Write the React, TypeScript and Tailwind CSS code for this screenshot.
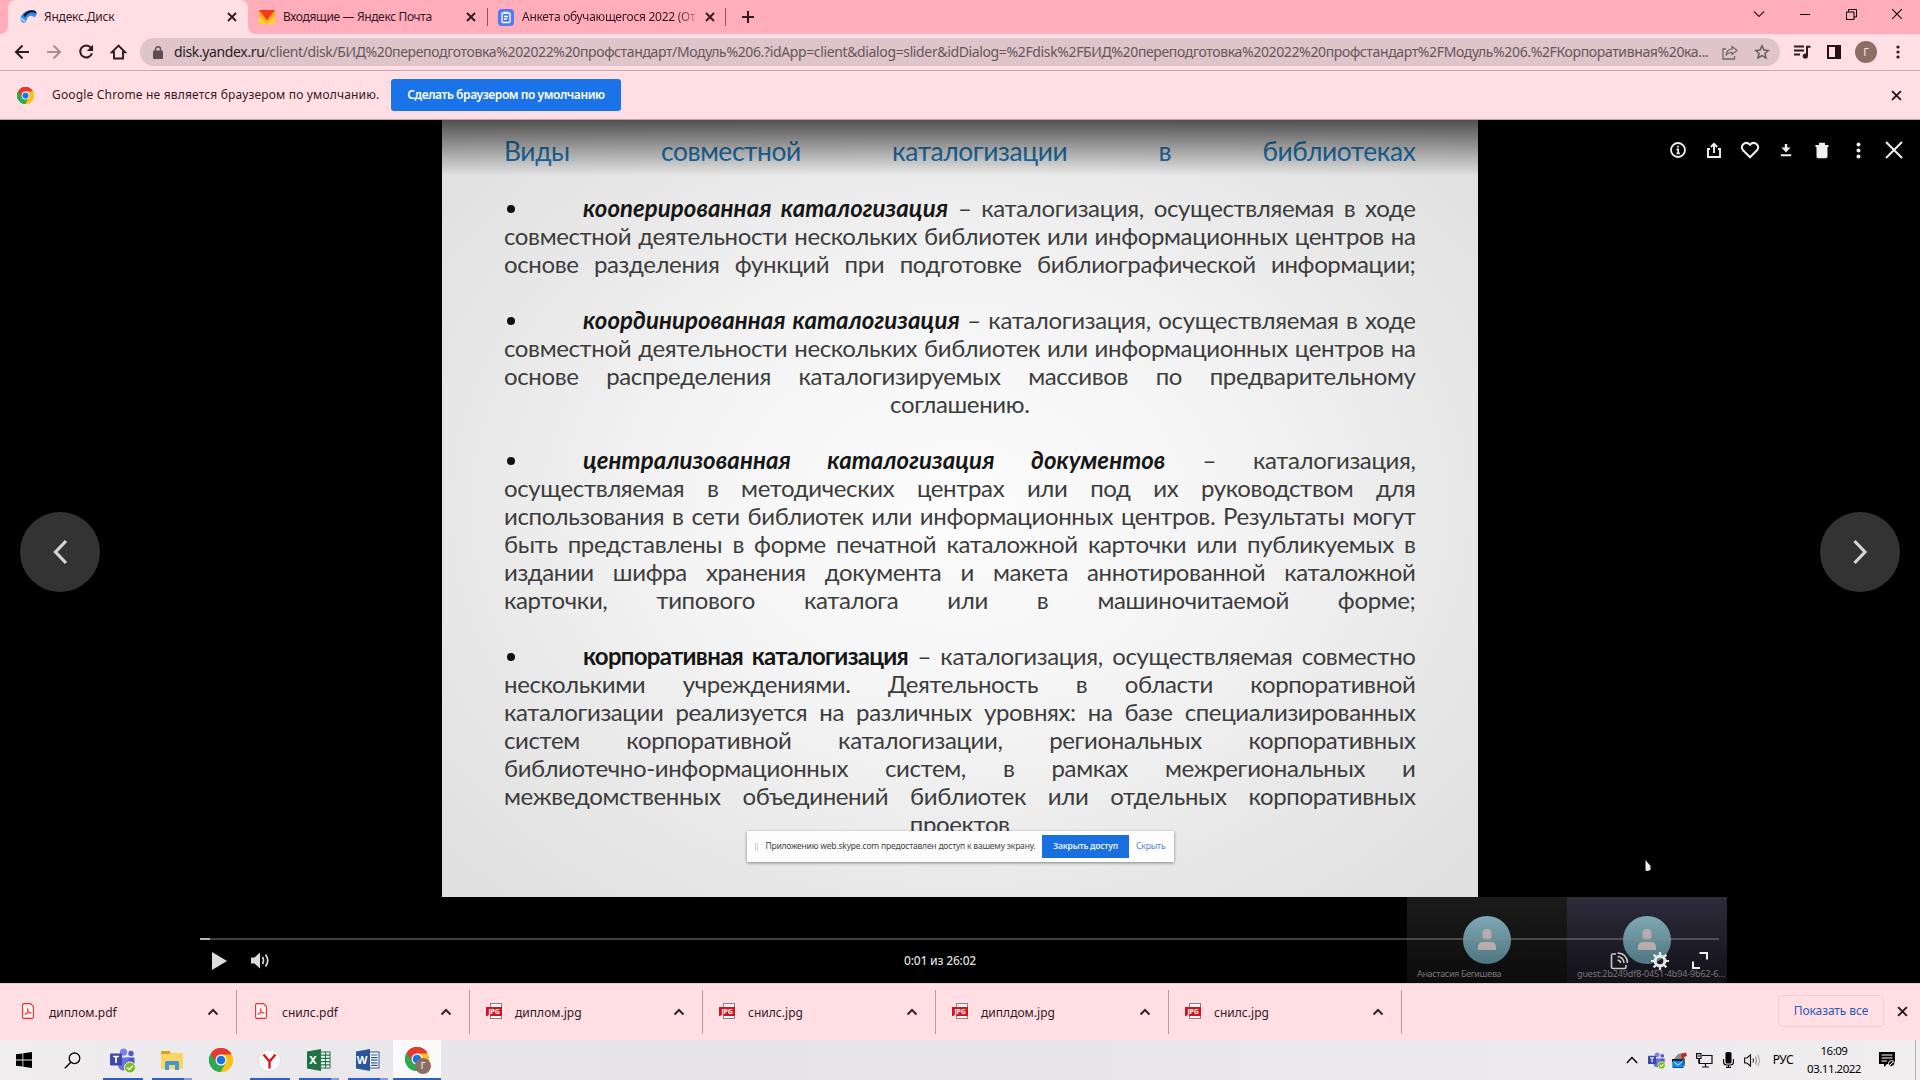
import type { ReactNode } from "react";

/* ---------- shared icons ---------- */

function CloseIcon({ size = 10, stroke = 1.8, color = "#2b1a1e" }: { size?: number; stroke?: number; color?: string }) {
  return (
    <svg width={size} height={size} viewBox="0 0 10 10" className="shrink-0">
      <path d="M1 1L9 9M9 1L1 9" stroke={color} strokeWidth={stroke} fill="none" />
    </svg>
  );
}

function ChromeLogo({ size }: { size: number }) {
  return (
    <svg width={size} height={size} viewBox="0 0 48 48" className="shrink-0">
      <path d="M24 24L3.2 12A24 24 0 0 1 44.8 12Z" fill="#e33b2e" />
      <path d="M24 24L44.8 12A24 24 0 0 1 24 48Z" fill="#fbc116" />
      <path d="M24 24L24 48A24 24 0 0 1 3.2 12Z" fill="#2da94f" />
      <path d="M24 13H45.3A24 24 0 0 0 3.2 12L14.5 29.5Z" fill="#e33b2e" />
      <path d="M33.5 29.5L23 48A24 24 0 0 0 45.3 13H24Z" fill="#fbc116" />
      <path d="M14.5 29.5L3.2 12A24 24 0 0 0 23 48L33.5 29.5Z" fill="#2da94f" />
      <circle cx="24" cy="24" r="11" fill="#fff" />
      <circle cx="24" cy="24" r="8.7" fill="#1a73e8" />
    </svg>
  );
}

/* ---------- browser chrome ---------- */

function DiskIcon() {
  return (
    <svg width="17" height="16" viewBox="0 0 17 16">
      <path d="M0.5 10C0.5 5 6 1 12 1C15 1 17 2.500 16.500 5C16 7 15 8 14 8.500C13 6.500 10 6 8 8C6.500 9.500 7 12 5 13.500C3 14.500 .5 13 .5 10Z" fill="#2f8df5" />
      <path d="M3.500 6C5.500 2.800 9 1 12.500 1.200C15.500 1.500 16.800 3 16.500 5C14 3 10.500 3.200 8 5C6.500 6 5.800 7 5 8C4 8 3.300 7 3.500 6Z" fill="#171a2a" />
      <path d="M1.200 9C2 11 3.500 12 5.200 11.500" stroke="#a8d4ff" strokeWidth="2" fill="none" />
    </svg>
  );
}

function MailIcon() {
  return (
    <svg width="16" height="14" viewBox="0 0 16 14">
      <path d="M0 0H16V14H0Z" fill="#ffcf2e" />
      <path d="M0 0L8 12L16 0V5L8 14L0 5Z" fill="#f9a91f" />
      <path d="M0 0H16L8 10.500Z" fill="#f23a1f" />
    </svg>
  );
}

function FormIcon() {
  return (
    <svg width="16" height="17" viewBox="0 0 16 17">
      <rect width="16" height="17" rx="4" fill="#4f79f6" />
      <rect x="4" y="4" width="8" height="9.500" rx="1.200" fill="none" stroke="#fff" strokeWidth="1.400" />
      <path d="M6 3.500H10M6 7.500H10M6 10H9" stroke="#fff" strokeWidth="1.300" />
    </svg>
  );
}

function TabStrip() {
  return (
    <div className="flex h-[34px] items-stretch bg-[#ffacbb]">
      <div className="flex w-2 items-end bg-[#ffdfe4]">
        <div className="h-full w-2 rounded-br-lg bg-[#ffacbb]" />
      </div>
      <div className="flex w-[240px] items-center rounded-t-lg bg-[#ffdfe4] pl-3 pr-[11px]">
        <DiskIcon />
        <span className="ml-[7px] flex-1 text-[12px] tracking-[-0.2px]">Яндекс.Диск</span>
        <CloseIcon />
      </div>
      <div className="flex w-2 bg-[#ffdfe4]">
        <div className="h-full w-2 rounded-bl-lg bg-[#ffacbb]" />
      </div>
      <div className="flex w-[231px] items-center pl-[3px] pr-[11px]">
        <MailIcon />
        <span className="ml-2 flex-1 whitespace-nowrap text-[12px] tracking-[-0.36px]">Входящие — Яндекс Почта</span>
        <CloseIcon />
      </div>
      <div className="my-2 w-px bg-[#8d5560]" />
      <div className="flex w-[237px] items-center pl-[10px] pr-[10px]">
        <FormIcon />
        <span className="ml-2 whitespace-nowrap bg-linear-to-r from-[#33181e] from-88% to-[#ffacbb] to-105% bg-clip-text text-[12px] tracking-[-0.27px] text-transparent">
          Анкета обучающегося 2022 (От
        </span>
        <span className="flex-1" />
        <CloseIcon />
      </div>
      <div className="my-2 w-px bg-[#8d5560]" />
      <div className="flex w-11 items-center justify-center">
        <svg width="14" height="14" viewBox="0 0 14 14">
          <path d="M7 1V13M1 7H13" stroke="#2b1a1e" strokeWidth="2" />
        </svg>
      </div>
      <div className="flex-1" />
      <div className="flex h-7 w-[184px] items-center">
        <div className="flex w-[46px] justify-center">
          <svg width="12" height="8" viewBox="0 0 12 8"><path d="M1 1.500L6 6.500L11 1.500" fill="none" stroke="#3a1d24" strokeWidth="1.200" /></svg>
        </div>
        <div className="flex w-[46px] justify-center">
          <div className="h-px w-[10px] bg-black" />
        </div>
        <div className="flex w-[46px] justify-center">
          <svg width="11" height="11" viewBox="0 0 11 11"><path d="M.5 3H8V10.500H.5ZM2.500 3V.5H10.500V8H8" fill="none" stroke="#000" /></svg>
        </div>
        <div className="flex w-[46px] justify-center">
          <CloseIcon size={12} stroke={0.9} color="#000" />
        </div>
      </div>
    </div>
  );
}

function Toolbar() {
  return (
    <div className="flex h-[37px] items-center border-b border-[#cfa9b0] bg-[#ffdfe4]">
      <div className="flex w-[140px] items-center pl-[6px]">
        <div className="flex w-8 justify-center">
          <svg width="16" height="16" viewBox="0 0 16 16"><path d="M15 8H2.500M8.500 1.500L2 8L8.500 14.500" fill="none" stroke="#2b1a1e" strokeWidth="2" /></svg>
        </div>
        <div className="flex w-8 justify-center">
          <svg width="16" height="16" viewBox="0 0 16 16"><path d="M1 8H13.500M7.500 1.500L14 8L7.500 14.500" fill="none" stroke="#a98e93" strokeWidth="2" /></svg>
        </div>
        <div className="flex w-8 justify-center">
          <svg width="16" height="16" viewBox="0 0 16 16">
            <path d="M12.900 3.600A6 6 0 1 0 14 9.200" fill="none" stroke="#2b1a1e" strokeWidth="2" />
            <path d="M15 .8V7H8.800Z" fill="#2b1a1e" />
          </svg>
        </div>
        <div className="flex w-8 justify-center">
          <svg width="17" height="16" viewBox="0 0 17 16"><path d="M8.500 1.600L1.800 8.300H4V14.500H13V8.300H15.200Z" fill="none" stroke="#2b1a1e" strokeWidth="1.900" /></svg>
        </div>
      </div>
      <div className="flex h-7 w-[1640px] items-center rounded-full bg-[#dfc5ca] pl-[13px] pr-[10px]">
        <svg width="10" height="13" viewBox="0 0 10 13">
          <rect y="4.500" width="10" height="8.500" rx="1" fill="#5d4e51" />
          <path d="M2.500 5V3.300A2.500 2.500 0 0 1 7.500 3.300V5" fill="none" stroke="#5d4e51" strokeWidth="1.400" />
        </svg>
        <span className="ml-[11px] w-[1548px] whitespace-nowrap text-[14px] leading-7 tracking-[-0.367px] text-[#66565a]">
          <span className="text-[#2b1a1e]">disk.yandex.ru</span>
          /client/disk/БИД%20переподготовка%202022%20профстандарт/Модуль%206.?idApp=client&amp;dialog=slider&amp;idDialog=%2Fdisk%2FБИД%20переподготовка%202022%20профстандарт%2FМодуль%206.%2FКорпоративная%20ка...
        </span>
        <svg width="16" height="15" viewBox="0 0 16 15">
          <path d="M4 4H1V14H12.500V11M10 1.500L15 5.500L10 9.500V7.300C7 7.300 5.200 8.500 4 10.500C4.300 7 6.500 4.200 10 3.900Z" fill="none" stroke="#76666a" strokeWidth="1.300" />
        </svg>
        <span className="flex-1" />
        <svg width="16" height="16" viewBox="0 0 16 16">
          <path d="M8 1.800L9.900 6L14.400 6.500L11 9.500L12 14L8 11.600L4 14L5 9.500L1.600 6.500L6.100 6Z" fill="none" stroke="#6b5b5f" strokeWidth="1.500" />
        </svg>
      </div>
      <div className="flex flex-1 items-center pl-[6px]">
        <div className="flex w-8 justify-center">
          <svg width="17" height="14" viewBox="0 0 17 14">
            <path d="M0 1.500H10M0 5.500H10M0 9.500H6" stroke="#2b1a1e" strokeWidth="1.800" />
            <path d="M13 11V1.800H16.500" stroke="#2b1a1e" strokeWidth="2" fill="none" />
            <circle cx="11.300" cy="11" r="2.600" fill="#2b1a1e" />
          </svg>
        </div>
        <div className="flex w-8 justify-center">
          <div className="h-[14px] w-[14px] border-2 border-r-[6px] border-[#221216]" />
        </div>
        <div className="flex w-8 justify-center">
          <div className="flex h-[22px] w-[22px] items-center justify-center rounded-full bg-[#8d6e63] text-[11px] text-[#eee3e0]">Г</div>
        </div>
        <div className="flex w-8 justify-center">
          <svg width="4" height="14" viewBox="0 0 4 14"><g fill="#2b1a1e"><circle cx="2" cy="2" r="1.600" /><circle cx="2" cy="7" r="1.600" /><circle cx="2" cy="12" r="1.600" /></g></svg>
        </div>
      </div>
    </div>
  );
}

function InfoBar() {
  return (
    <div className="flex h-[49px] items-center border-b border-[#c3a0a7] bg-[#ffdfe4] pl-[17px] pr-[18px]">
      <ChromeLogo size={17} />
      <span className="ml-[18px] w-[339px] whitespace-nowrap text-[12px] tracking-[0.17px]">
        Google Chrome не является браузером по умолчанию.
      </span>
      <div className="flex h-8 w-[230px] items-center justify-center whitespace-nowrap rounded-[3px] bg-[#1a73e8] text-[12px] font-semibold tracking-[-0.42px] text-white">
        Сделать браузером по умолчанию
      </div>
      <span className="flex-1" />
      <CloseIcon size={11} />
    </div>
  );
}

/* ---------- slide ---------- */

type Para = { lead: ReactNode; first: string; lines: string[]; last?: string };

const term = "font-bold text-[#161616]";

const paragraphs: Para[] = [
  {
    lead: <span className={`${term} italic tracking-[0.04px]`}>кооперированная каталогизация</span>,
    first: " – каталогизация, осуществляемая в ходе",
    lines: [
      "совместной деятельности нескольких библиотек или информационных центров на",
      "основе разделения функций при подготовке библиографической информации;",
    ],
  },
  {
    lead: <span className={`${term} italic tracking-[0.04px]`}>координированная каталогизация</span>,
    first: " – каталогизация, осуществляемая в ходе",
    lines: [
      "совместной деятельности нескольких библиотек или информационных центров на",
      "основе распределения каталогизируемых массивов по предварительному",
    ],
    last: "соглашению.",
  },
  {
    lead: <span className={`${term} italic tracking-[0.04px]`}>централизованная каталогизация документов</span>,
    first: " – каталогизация,",
    lines: [
      "осуществляемая в методических центрах или под их руководством для",
      "использования в сети библиотек или информационных центров. Результаты могут",
      "быть представлены в форме печатной каталожной карточки или публикуемых в",
      "издании шифра хранения документа и макета аннотированной каталожной",
      "карточки, типового каталога или в машиночитаемой форме;",
    ],
  },
  {
    lead: <span className={`${term} tracking-[-0.72px]`}>корпоративная каталогизация</span>,
    first: " – каталогизация, осуществляемая совместно",
    lines: [
      "несколькими учреждениями. Деятельность в области корпоративной",
      "каталогизации реализуется на различных уровнях: на базе специализированных",
      "систем корпоративной каталогизации, региональных корпоративных",
      "библиотечно-информационных систем, в рамках межрегиональных и",
      "межведомственных объединений библиотек или отдельных корпоративных",
    ],
    last: "проектов",
  },
];

function Slide() {
  return (
    <div className="relative ml-[442px] h-[777px] w-[1035.500px] bg-[radial-gradient(ellipse_60%_62%_at_50%_50%,#fcfcfc_0%,#f4f4f4_45%,#e8e8e8_80%,#e0e0e0_110%)] pl-[62px] pr-[62px] pt-[14.500px] font-['Lato','Noto_Sans',sans-serif]">
      <div className="h-8 text-[26.400px] leading-8 tracking-[-0.4px] text-[#2176b2] [text-align-last:justify]">
        Виды совместной каталогизации в библиотеках
      </div>
      <div className="mt-[27.500px] flex flex-col gap-[28px] text-[24px] leading-[28px] tracking-[-0.37px] text-[#3c3c3c]">
        {paragraphs.map((p, i) => (
          <div key={i}>
            <div className="flex h-[28px]">
              <div className="flex w-[79px] items-center pl-[3px] pt-[2px]">
                <div className="h-2 w-2 rounded-full bg-[#111]" />
              </div>
              <div className="flex-1 whitespace-nowrap [text-align-last:justify]">
                {p.lead}
                {p.first}
              </div>
            </div>
            {p.lines.map((l) => (
              <div key={l} className="h-[28px] whitespace-nowrap [text-align-last:justify]">{l}</div>
            ))}
            {p.last && <div className="h-[28px] text-center">{p.last}</div>}
          </div>
        ))}
      </div>
      <div className="absolute left-[304.500px] top-[711px] flex h-[31px] w-[427px] items-center bg-[#fdfdfd] pl-2 pr-2 font-['Noto_Sans',sans-serif] text-[8.500px] shadow-[0_1px_3px_rgba(0,0,0,0.45)]">
        <div className="h-2 w-1 border-x border-[#cfcfcf]" />
        <span className="ml-[7px] w-[278px] whitespace-nowrap tracking-[-0.2px] text-[#444]">Приложению web.skype.com предоставлен доступ к вашему экрану.</span>
        <span className="flex h-[23px] w-[87px] items-center justify-center bg-[#1a6fe0] font-semibold tracking-[-0.2px] text-[#e6effc]">Закрыть доступ</span>
        <span className="ml-[7px] tracking-[-0.1px] text-[#4a84d2]">Скрыть</span>
      </div>
    </div>
  );
}

/* ---------- video viewer ---------- */

function Participant({ name, tone, label }: { name: string; tone: string; label: string }) {
  return (
    <div className={`flex h-[86px] w-40 flex-col ${tone}`}>
      <div className="mt-[19px] flex h-12 w-12 items-center justify-center self-center rounded-full bg-linear-to-b from-[#7fa9b5] to-[#4e7580]">
        <svg width="18" height="22" viewBox="0 0 18 22" fill="#b5acab">
          <rect x="4.500" width="9" height="11" rx="4" />
          <path d="M0 21V17.500A4.500 4.500 0 0 1 4.500 13H13.500A4.500 4.500 0 0 1 18 17.500V21Z" />
        </svg>
      </div>
      <div className={`mt-[3px] whitespace-nowrap pl-[10px] text-[9px] leading-[14px] text-[#77777b] ${label}`}>{name}</div>
    </div>
  );
}

function ViewerButton({ children }: { children: ReactNode }) {
  return <div className="flex h-9 w-9 items-center justify-center">{children}</div>;
}

function NavCircle({ d }: { d: string }) {
  return (
    <div className="flex h-20 w-20 items-center justify-center rounded-full bg-[#333]">
      <svg width="16" height="26" viewBox="0 0 16 26"><path d={d} fill="none" stroke="#d5d5d5" strokeWidth="3.200" /></svg>
    </div>
  );
}

function Viewer() {
  return (
    <div className="relative h-[863px] overflow-hidden bg-black">
      <Slide />
      <div className="ml-[1407px] flex">
        <Participant name="Анастасия Бегишева" tone="bg-linear-to-b from-[#1b1b1b] to-[#0c0c0c]" label="tracking-[-0.35px]" />
        <Participant name="guest:2b249df8-0451-4b94-9b62-6..." tone="bg-linear-to-b from-[#2e2c3b] to-[#121118]" label="tracking-[-0.13px]" />
      </div>

      <div className="absolute inset-x-0 top-0 h-[56px] bg-linear-to-b from-black/65 via-black/32 to-transparent" />

      <svg className="absolute left-[1644px] top-[740px]" width="8" height="12" viewBox="0 0 8 12">
        <path d="M1.500 0L6.500 6V10L3.500 11L1.500 10.500Z" fill="#f2f2f2" />
      </svg>

      <div className="absolute inset-x-5 top-[392px] flex justify-between">
        <NavCircle d="M14 2L3.500 13L14 24" />
        <NavCircle d="M2.500 2L13 13L2.500 24" />
      </div>

      <div className="absolute right-2 top-3 flex">
        <ViewerButton>
          <svg width="18" height="18" viewBox="0 0 18 18"><circle cx="9" cy="9" r="7" fill="none" stroke="#f0f0f0" strokeWidth="1.800" /><path d="M9 4.800V6.500M7.500 8.300H9.200V13M7.500 12.400H10.800" stroke="#f0f0f0" strokeWidth="1.700" fill="none" /></svg>
        </ViewerButton>
        <ViewerButton>
          <svg width="16" height="17" viewBox="0 0 16 17"><path d="M4 7H2V15H14V7H12M8 11V2M4.800 5L8 1.800L11.200 5" fill="none" stroke="#f0f0f0" strokeWidth="1.900" /></svg>
        </ViewerButton>
        <ViewerButton>
          <svg width="20" height="18" viewBox="0 0 20 18"><path d="M10 16.300L2.800 9A4.400 4.400 0 0 1 9 2.900L10 3.900L11 2.900A4.400 4.400 0 0 1 17.200 9Z" fill="none" stroke="#f0f0f0" strokeWidth="2" /></svg>
        </ViewerButton>
        <ViewerButton>
          <svg width="12" height="14" viewBox="0 0 12 14" fill="#f0f0f0"><path d="M4.800 1H7.200V4.500H10.500L6 9.500L1.500 4.500H4.800ZM.8 11.200H11.200V13.200H.8Z" /></svg>
        </ViewerButton>
        <ViewerButton>
          <svg width="14" height="17" viewBox="0 0 14 17" fill="#f0f0f0"><path d="M.5 3H4V1.500Q4 .8 4.700 .8H9.300Q10 .8 10 1.500V3H13.500V5H12.500V14.500Q12.500 16.300 10.700 16.300H3.300Q1.500 16.300 1.500 14.500V5H.5Z" /></svg>
        </ViewerButton>
        <ViewerButton>
          <svg width="5" height="17" viewBox="0 0 5 17" fill="#f0f0f0"><circle cx="2.500" cy="2.500" r="2" /><circle cx="2.500" cy="8.500" r="2" /><circle cx="2.500" cy="14.500" r="2" /></svg>
        </ViewerButton>
        <ViewerButton>
          <CloseIcon size={20} stroke={1} color="#f0f0f0" />
        </ViewerButton>
      </div>

      <div className="absolute inset-x-[200px] bottom-0 h-[45px]">
        <div className="flex h-[2px] w-[1519px] bg-[#8b8b8b]/45">
          <div className="h-[2px] w-[10px] bg-[#b5b5ae]" />
        </div>
        <div className="mt-1 grid h-[33px] grid-cols-3 items-center">
          <div className="flex items-center pl-3">
            <svg width="15" height="18" viewBox="0 0 15 18"><path d="M0 0V18L15 9Z" fill="#dcdcdc" /></svg>
            <svg className="ml-6" width="19" height="17" viewBox="0 0 19 17">
              <path d="M0 5.500H3.500L9 .5V16.500L3.500 11.500H0Z" fill="#dcdcdc" />
              <path d="M11.500 5Q13.500 8.500 11.500 12M14.500 2.500Q19 8.500 14.500 14.500" fill="none" stroke="#dcdcdc" strokeWidth="1.700" />
            </svg>
          </div>
          <div className="pr-[40px] text-center text-[12px] font-medium tracking-[-0.18px] text-[#dedede]">0:01 из 26:02</div>
          <div className="flex items-center justify-end pr-[12px]">
            <svg width="19" height="18" viewBox="0 0 19 18">
              <path d="M6 2H3Q1.500 2 1.500 3.500V15Q1.500 16.500 3 16.500H14.500Q16 16.500 16 15V13" fill="none" stroke="#c9c9c9" strokeWidth="1.600" />
              <path d="M7.500 1Q17 1.500 17.500 11M7.500 4.500Q13.500 5 14 11M7.500 8Q10.500 8.500 10.500 11" fill="none" stroke="#c9c9c9" strokeWidth="1.600" />
            </svg>
            <svg className="ml-[22px]" width="18" height="18" viewBox="-9 -9 18 18">
              <circle r="4.900" fill="none" stroke="#e6e6e6" strokeWidth="3.200" />
              <g stroke="#e6e6e6" strokeWidth="2.200">
                <path d="M0 -9V-5.500M0 9V5.500M-9 0H-5.500M9 0H5.500M-6.400 -6.400L-4 -4M6.400 6.400L4 4M6.400 -6.400L4 -4M-6.400 6.400L-4 4" />
              </g>
            </svg>
            <svg className="ml-[23px]" width="16" height="17" viewBox="0 0 16 17"><path d="M7.500 1H15V7.500M1 9.500V16H8" fill="none" stroke="#ececec" strokeWidth="2" /></svg>
          </div>
        </div>
      </div>
    </div>
  );
}

/* ---------- download shelf ---------- */

function PdfIcon() {
  return (
    <svg width="12" height="16" viewBox="0 0 12 16" className="-mt-[3px]">
      <path d="M2 .6H8.500L11.400 3.500V14Q11.400 15.400 10 15.400H2Q.6 15.400 .6 14V2Q.6 .6 2 .6Z" fill="#fff3f4" stroke="#e5302a" strokeWidth="1.100" />
      <path d="M3 11.500C5 10.500 6.500 7.500 6 5.800C5.500 5 5 6.500 6.200 8.200C7 9.500 8.500 10.500 9.300 10C9.500 9.300 6 9.200 4 10.800C2.800 11.800 2.600 12 3 11.500Z" fill="none" stroke="#e5302a" strokeWidth=".9" />
    </svg>
  );
}

function JpgIcon() {
  return (
    <div className="relative -mt-[2px] h-4 w-4">
      <div className="ml-1 h-4 w-3 border border-[#8b7f80] bg-[#fdf6f6]" />
      <div className="absolute left-0 top-1 flex h-[9px] w-4 items-center justify-center bg-[#cf1520] text-[7px] font-bold leading-none tracking-[-0.2px] text-white">JPG</div>
    </div>
  );
}

const downloads = [
  { name: "диплом.pdf", pdf: true },
  { name: "снилс.pdf", pdf: true },
  { name: "диплом.jpg", pdf: false },
  { name: "снилс.jpg", pdf: false },
  { name: "диплдом.jpg", pdf: false },
  { name: "снилс.jpg", pdf: false },
];

function DownloadShelf() {
  return (
    <div className="flex h-[57px] items-stretch border-t border-[#e6c9ce] bg-[#ffdfe4]">
      {downloads.map((d, i) => (
        <div key={i} className={i === 0 ? "flex w-[237px] items-center pl-4" : "flex w-[233px] items-center pl-[12px]"}>
          <div className="flex w-6 justify-center">{d.pdf ? <PdfIcon /> : <JpgIcon />}</div>
          <span className="ml-[9px] flex-1 pt-px text-[12px] tracking-[0.02px]">{d.name}</span>
          <svg width="12" height="8" viewBox="0 0 12 8"><path d="M1.500 6.500L6 2L10.500 6.500" fill="none" stroke="#33222a" strokeWidth="2" /></svg>
          <div className="ml-[17px] h-11 w-px bg-[#b79aa0]" />
        </div>
      ))}
      <div className="flex flex-1 items-center justify-end pb-[2px] pr-[12px]">
        <div className="flex h-8 w-[106px] items-center justify-center rounded border border-[#ecd0d6] text-[12px] tracking-[-0.1px] text-[#2e58b8]">Показать все</div>
        <div className="ml-[13px]"><CloseIcon size={11} /></div>
      </div>
    </div>
  );
}

/* ---------- taskbar ---------- */

function TeamsIcon({ size }: { size: number }) {
  return (
    <svg width={size} height={size} viewBox="0 0 25 25">
      <circle cx="21" cy="5.500" r="2.700" fill="#5059c9" />
      <path d="M17 9.500H24.500V15.500A4 4 0 0 1 17 16.500Z" fill="#5059c9" />
      <circle cx="13.500" cy="4.200" r="3.600" fill="#7b83eb" />
      <path d="M8 9.500H19V17A5.500 5.500 0 0 1 8 17Z" fill="#6a72d8" />
      <rect y="5.500" width="12" height="12" rx="1" fill="#4048a8" />
      <path d="M3 8.500H9M6 8.500V15" stroke="#fff" strokeWidth="1.700" />
      <circle cx="20" cy="19.500" r="5.500" fill="#7dbb1e" stroke="#f3f7ea" strokeWidth="1" />
      <path d="M17.300 19.500L19.300 21.500L22.800 17.800" stroke="#fff" strokeWidth="1.500" fill="none" />
    </svg>
  );
}

function OfficeIcon({ letter, color, sheet }: { letter: string; color: string; sheet: string }) {
  return (
    <div className="relative flex h-[22px] w-6 items-center justify-end">
      <svg width="24" height="22" viewBox="0 0 24 22">
        <rect x="12.500" y="3" width="10.500" height="16" fill="#fff" stroke={color} strokeWidth="1" />
        <path d={sheet} stroke={color} strokeWidth="1.200" fill="none" />
        <path d="M0 2.500L14 0V22L0 19.500Z" fill={color} />
      </svg>
      <span className="absolute left-0 top-0 flex h-[22px] w-[13px] items-center justify-center text-[11px] font-bold text-white">{letter}</span>
    </div>
  );
}

const runningTone = "absolute bottom-0 h-[2px] bg-[#2b62c0]";

function TaskItem({ children, mark }: { children: ReactNode; mark?: "full" | "split" }) {
  return (
    <div className="relative flex h-10 w-[49px] items-center justify-center">
      {children}
      {mark === "full" && <div className={`${runningTone} left-[5px] w-10`} />}
      {mark === "split" && (
        <>
          <div className={`${runningTone} left-[5px] w-8`} />
          <div className="absolute bottom-0 left-[37px] h-[2px] w-2 bg-[#7fa0dc]" />
        </>
      )}
    </div>
  );
}

function Taskbar() {
  return (
    <div className="flex h-10 items-center bg-linear-to-r from-[#efedee] via-[#e6e3e9] via-35% to-[#efedee] text-black">
      <div className="flex w-12 justify-center">
        <svg width="16" height="16" viewBox="0 0 16 16"><path d="M0 2.300L6.500 1.400V7.600H0ZM7.300 1.300L16 0V7.600H7.300ZM0 8.400H6.500V14.600L0 13.700ZM7.300 8.400H16V16L7.300 14.700Z" /></svg>
      </div>
      <div className="flex w-[50px] justify-center pr-[2px]">
        <svg width="17" height="17" viewBox="0 0 17 17"><circle cx="10.500" cy="6.300" r="5.300" fill="none" stroke="#000" strokeWidth="1.300" /><path d="M6.800 10.200L.8 16.200" stroke="#000" strokeWidth="1.400" /></svg>
      </div>
      <TaskItem mark="full"><TeamsIcon size={25} /></TaskItem>
      <TaskItem mark="split">
        <svg width="22" height="19" viewBox="0 0 22 19">
          <path d="M0 1Q0 0 1 0H9L10.500 2H21Q22 2 22 3V17Q22 18 21 18H1Q0 18 0 17Z" fill="#fcd462" />
          <path d="M0 1Q0 0 1 0H9V3H0Z" fill="#dca21f" />
          <path d="M4 19V11.500Q4 10 5.500 10H16.500Q18 10 18 11.500V19H14V14H8V19Z" fill="#3d9ad6" />
        </svg>
      </TaskItem>
      <TaskItem><ChromeLogo size={24} /></TaskItem>
      <TaskItem mark="full">
        <svg width="23" height="23" viewBox="0 0 23 23"><circle cx="11.500" cy="11.500" r="11" fill="#fafafa" stroke="#d8d8d8" strokeWidth=".7" /><path d="M5.500 5.500L11.500 12.500L17.500 5.500M11.500 12V19.500" fill="none" stroke="#d8151d" strokeWidth="2.300" /></svg>
      </TaskItem>
      <TaskItem mark="split"><OfficeIcon letter="X" color="#1f7244" sheet="M13 6.200H23M13 9.400H23M13 12.600H23M13 15.800H23M18.500 3V19" /></TaskItem>
      <TaskItem mark="split"><OfficeIcon letter="W" color="#2a5699" sheet="M15 6H21.500M15 8.600H21.500M15 11.200H21.500M15 13.800H21.500M15 16.400H21.500" /></TaskItem>
      <div className="relative ml-px flex h-10 w-12 items-center justify-center border-b-2 border-[#2b62c0] bg-[#fafafa]">
        <ChromeLogo size={24} />
        <div className="absolute left-[22px] top-[18px] flex h-4 w-4 items-center justify-center rounded-full bg-[#8d6e63] text-[9px] text-white">Г</div>
      </div>
      <div className="flex-1" />
      <div className="flex w-6 justify-center">
        <svg width="12" height="8" viewBox="0 0 12 8"><path d="M.8 7L6 1.500L11.200 7" fill="none" stroke="#000" strokeWidth="1.400" /></svg>
      </div>
      <div className="flex w-6 justify-center"><TeamsIcon size={17} /></div>
      <div className="flex w-[23px] justify-center">
        <svg width="16" height="16" viewBox="0 0 16 16">
          <path d="M1 8L6 2L11 1L13 8V14H3Z" fill="#8a8d93" />
          <path d="M9 2L14 .5L15 4L12 5V11L10 8Z" fill="#c5232b" />
          <path d="M10 8L13 6V12L10 14Z" fill="#2f7a48" />
          <path d="M0 7H10V10H0Z" fill="#10151e" />
          <rect x="1" y="9" width="10" height="6.500" fill="#1590f2" stroke="#0c4fb0" />
          <path d="M1.500 9.500L6 13L10.500 9.500" fill="none" stroke="#c5e8ff" />
        </svg>
      </div>
      <div className="flex w-[26px] justify-center">
        <svg width="17" height="15" viewBox="0 0 17 15"><path d="M6 2.500H16V10.500H3.500V6M9.500 10.500V14M6 14H13M.6 .6H5V5.500H.6ZM1.500 3H4M2.800 5.500V10.500" fill="none" stroke="#111" strokeWidth="1.200" /></svg>
      </div>
      <div className="flex w-[22px] justify-center">
        <svg width="11" height="16" viewBox="0 0 11 16"><rect x="2.500" width="6" height="11.500" rx="1.500" /><path d="M.6 7V10Q.6 13 3.500 13H7.500Q10.400 13 10.400 10V7M5.500 13V15.400M3 15.400H8" fill="none" stroke="#000" strokeWidth="1.100" /></svg>
      </div>
      <div className="flex w-[26px] justify-center">
        <svg width="17" height="13" viewBox="0 0 17 13">
          <path d="M.6 4H3L6.500 .8V12.200L3 9H.6Z" fill="none" stroke="#111" strokeWidth="1.100" />
          <path d="M9 4.500Q10 6.500 9 8.500" fill="none" stroke="#111" strokeWidth="1.100" />
          <path d="M11.500 2.500Q13.500 6.500 11.500 10.500" fill="none" stroke="#777" />
          <path d="M14 .8Q17 6.500 14 12.200" fill="none" stroke="#999" />
        </svg>
      </div>
      <div className="w-9 text-center text-[12px] tracking-[-0.3px]">РУС</div>
      <div className="w-[66px] text-center text-[11.500px] leading-[18px] tracking-[-0.5px]">
        16:09
        <br />
        03.11.2022
      </div>
      <div className="ml-[12px] flex w-[18px]">
        <svg width="17" height="16" viewBox="0 0 17 16">
          <path d="M0 0H16V12H8L5 15V12H0Z" />
          <path d="M2.500 3H13.500M2.500 6H13.500M2.500 9H8" stroke="#fff" strokeWidth="1.100" />
          <circle cx="12.500" cy="11.500" r="3" fill="#111" stroke="#eee" />
          <path d="M11 13L14 10" stroke="#eee" />
        </svg>
      </div>
      <div className="ml-[18px] mr-[4px] h-10 w-px bg-[#b5b3b5]" />
    </div>
  );
}

export default function App() {
  return (
    <div className="flex h-[1080px] w-[1920px] flex-col overflow-hidden bg-black font-['Noto_Sans',sans-serif] text-[#33181e]">
      <TabStrip />
      <Toolbar />
      <InfoBar />
      <Viewer />
      <DownloadShelf />
      <Taskbar />
    </div>
  );
}
